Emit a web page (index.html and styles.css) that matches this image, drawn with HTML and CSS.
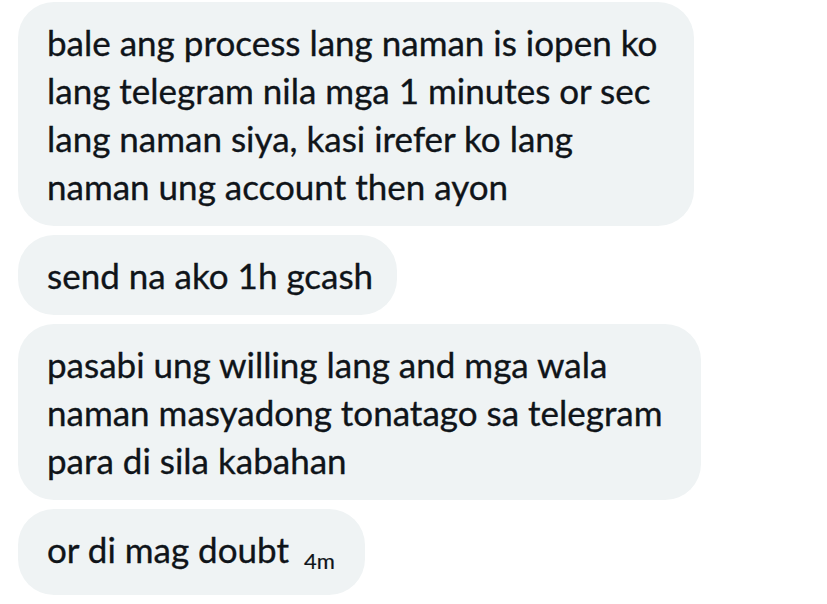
FILE: index.html
```html
<!DOCTYPE html>
<html>
<head>
<meta charset="utf-8">
<link rel="stylesheet" href="styles.css">
</head>
<body>
<div class="thread">
  <div class="bubble b1">bale ang process lang naman is iopen ko<br>lang telegram nila mga 1 minutes or sec<br>lang naman siya, kasi irefer ko lang<br>naman ung account then ayon</div>
  <div class="bubble b2">send na ako 1h gcash</div>
  <div class="bubble b3">pasabi ung willing lang and mga wala<br>naman masyadong tonatago sa telegram<br>para di sila kabahan</div>
  <div class="bubble b4">or di mag doubt <span class="time">4m</span></div>
</div>
</body>
</html>
```
FILE: styles.css
```css
html, body {
  margin: 0;
  padding: 0;
  background: #ffffff;
}
body {
  font-family: Lato, "Open Sans", sans-serif;
  color: #0f1419;
}
.thread {
  display: flex;
  flex-direction: column;
  align-items: flex-start;
  gap: 9px;
  padding: 2px 0 0 18px;
}
.bubble {
  background: #eff3f4;
  border-radius: 36px;
  font-size: 35px;
  line-height: 48px;
  padding: 16px 28px 16px 29px;
  white-space: nowrap;
  -webkit-text-stroke: 0.35px #0f1419;
}
.b1 {
  padding-right: 37px;
}
.b2 {
  padding-right: 24px;
}
.b3 {
  padding-right: 38px;
}
.b4 {
  padding-right: 30px;
}
.time {
  font-size: 22px;
  margin-left: 6px;
  position: relative;
  top: 6px;
  -webkit-text-stroke: 0.2px #0f1419;
}
```
